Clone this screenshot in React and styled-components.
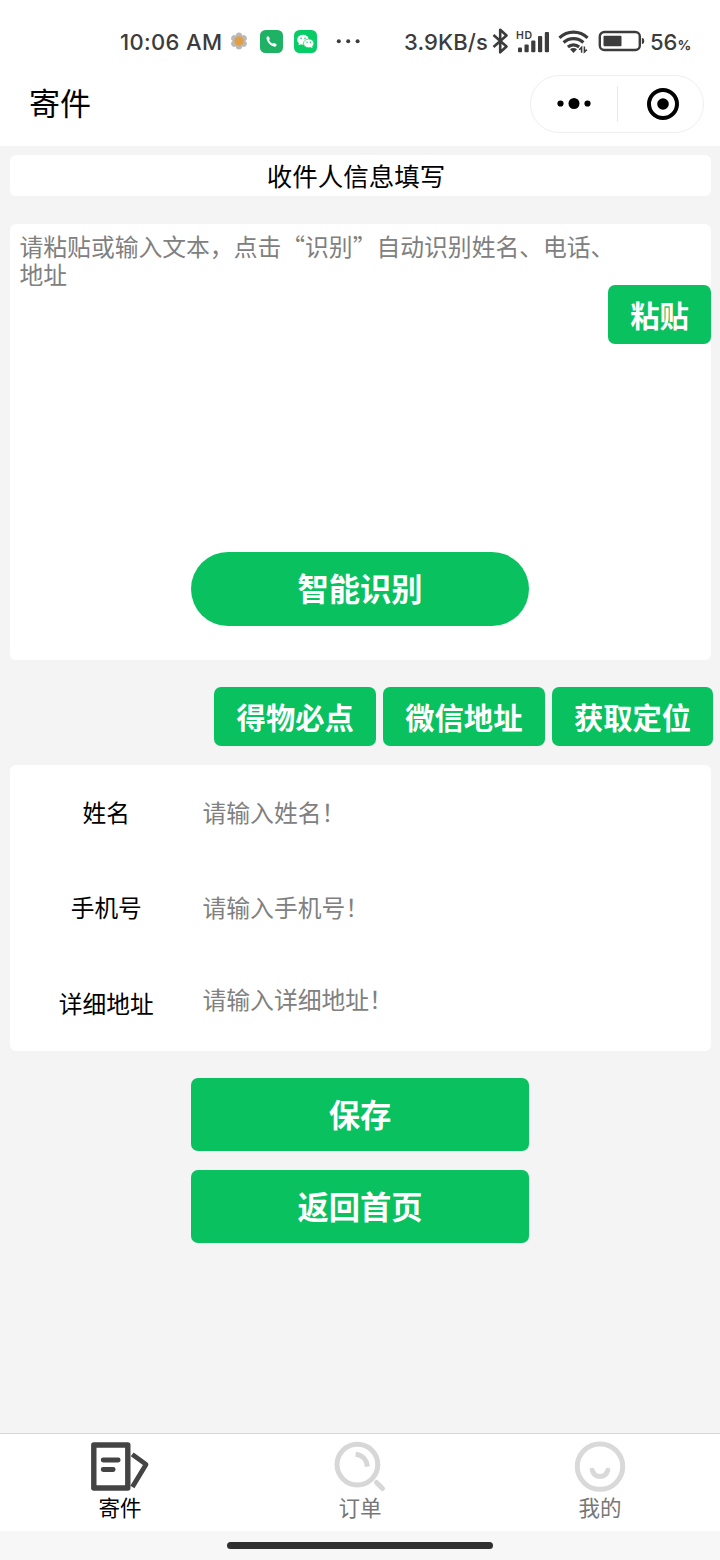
import React from "react";
import styled, { createGlobalStyle } from "styled-components";

const green = "#09c15f";
const ink = "#3c3c3c";

const GlobalStyle = createGlobalStyle`
    body {
        margin: 0;
        background: #f4f4f4;
        font-family: "Noto Sans CJK SC", sans-serif;
    }
    * {
        box-sizing: border-box;
    }
    button, input, textarea {
        font-family: inherit;
        border: 0;
        outline: 0;
        padding: 0;
    }
`;

const Page = styled.div`
    width: 720px;
    height: 1560px;
    display: flex;
    flex-direction: column;
    background: #f4f4f4;
    overflow: hidden;
`;

const StatusBar = styled.div`
    height: 74px;
    padding: 8px 30px 0 120px;
    display: flex;
    align-items: center;
    background: white;
    color: ${ink};
    font-family: Inter, sans-serif;
    svg {
        display: block;
        flex: none;
    }
`;

const StatusText = styled.span`
    font-size: 22px;
    font-weight: 500;
    height: 31px;
    line-height: 30px;
    padding-top: 1px;
    width: ${props => props.$width}px;
    letter-spacing: ${props => props.$spacing || 0}px;
    white-space: nowrap;
    flex: none;
    small {
        font-size: 13.5px;
        font-weight: 700;
        line-height: 1;
        letter-spacing: 0;
    }
`;

const Gap = styled.i`
    flex: none;
    width: ${props => props.$w}px;
`;

const NavBar = styled.div`
    height: 72px;
    padding: 0 16px 12px 29px;
    display: flex;
    align-items: center;
    justify-content: space-between;
    background: white;
`;

const NavTitle = styled.h1`
    margin: 0;
    padding-bottom: 4px;
    font-size: 31px;
    font-weight: 400;
    line-height: 44px;
    color: black;
`;

const Capsule = styled.div`
    width: 174px;
    height: 58px;
    border: 1px solid #efefef;
    border-radius: 29px;
    display: flex;
    align-items: center;
`;

const CapsuleHalf = styled.div`
    width: 86px;
    height: 36px;
    display: flex;
    align-items: center;
    justify-content: center;
    & + & {
        border-left: 1px solid #e9e9e9;
        padding-left: 4px;
    }
`;

const Content = styled.main`
    flex: 1;
    display: flex;
    flex-direction: column;
    padding: 9px 9px 0 10px;
`;

const Card = styled.section`
    flex: none;
    height: ${props => props.$height}px;
    background: white;
    border-radius: 6px;
`;

const TitleCard = styled(Card)`
    display: flex;
    justify-content: center;
    padding-right: 9px;
    font-size: 25.5px;
    line-height: 40px;
    color: black;
`;

const PasteCard = styled(Card)`
    margin-top: 27.5px;
    display: grid;
    grid-template-columns: 598px 103px;
    grid-template-rows: 328.5px 74px;
`;

/* a little wider than its column, so the first line can end above the paste button */
const PasteArea = styled.textarea`
    height: 300px;
    margin: 8.5px -9px 0 9.5px;
    width: 597px;
    resize: none;
    overflow: hidden;
    background: transparent;
    font-size: 23.8px;
    line-height: 28px;
    &::placeholder {
        color: #808080;
        opacity: 1;
    }
`;

const Button = styled.button`
    background: ${green};
    color: white;
    font-weight: 700;
    border-radius: 7px;
`;

const SmallButton = styled(Button)`
    width: ${props => props.$width || 161.7}px;
    height: 59px;
    padding-bottom: 1px;
    font-size: 29.3px;
    line-height: 58px;
    margin-top: ${props => props.$top || 0}px;
`;

const BigButton = styled(Button)`
    width: 338px;
    height: 73.5px;
    padding-bottom: 1px;
    font-size: 31.3px;
    line-height: 72px;
    border-radius: ${props => (props.$round ? 37 : 7)}px;
`;

const RecognizeRow = styled.div`
    grid-column: 1 / 3;
    display: flex;
    justify-content: center;
    align-items: flex-start;
    padding-right: 1px;
`;

const ActionRow = styled.div`
    display: flex;
    justify-content: flex-end;
    gap: 7px;
    margin: 27px -2.4px 19px 0;
`;

const FieldRow = styled.label`
    display: flex;
    align-items: center;
    height: 95.3px;
    padding-bottom: 1px;
    font-size: 23.7px;
`;

const FieldName = styled.span`
    width: 192.5px;
    text-align: center;
    color: black;
`;

const FieldInput = styled.input`
    flex: 1;
    height: 40px;
    font-size: 23.8px;
    margin-bottom: ${props => props.$lift || 1}px;
    background: transparent;
    &::placeholder {
        color: #808080;
        opacity: 1;
    }
`;

const SubmitColumn = styled.div`
    display: flex;
    flex-direction: column;
    align-items: center;
    gap: 18.5px;
    padding: 26.6px 1px 0 0;
`;

const TabBar = styled.nav`
    flex: none;
    height: 98px;
    display: grid;
    grid-template-columns: repeat(3, 1fr);
    border-top: 1px solid #d5d5d5;
    background: white;
`;

const Tab = styled.div`
    display: flex;
    flex-direction: column;
    align-items: center;
    padding-top: 4px;
    font-size: 21.5px;
    line-height: 30px;
    color: ${props => (props.$active ? "black" : "#777")};
    svg {
        display: block;
        margin-bottom: -2px;
    }
`;

const HomeArea = styled.div`
    flex: none;
    height: 29px;
    background: #f7f7f7;
    display: flex;
    align-items: center;
    justify-content: center;
`;

const HomeHandle = styled.div`
    width: 266px;
    height: 7px;
    border-radius: 4px;
    background: #303030;
`;

const FlowerIcon = () => (
    <svg width="20" height="20" viewBox="0 0 20 20">
        <g fill="#bcb8b5">
            {[0, 60, 120, 180, 240, 300].map(a => (
                <ellipse key={a} cx="10" cy="5" rx="3.2" ry="3.6" transform={`rotate(${a} 10 10)`} />
            ))}
        </g>
        <circle cx="10" cy="10" r="4.7" fill="#e0a04a" />
    </svg>
);

const PhoneIcon = () => (
    <svg width="23" height="23" viewBox="0 0 23 23">
        <rect width="23" height="23" rx="5.5" fill="#1fb264" />
        <path
            d="M6.6 7.1c.9-1.2 1.8-1.2 2.4-.2l.8 1.5c.3.7-.8 1.2-.6 1.8.5 1.5 1.8 2.8 3.3 3.4.7.2 1.1-.9 1.8-.6l1.8.9c.9.6.6 1.7-.5 2.5-2.7 1.6-9.9-4.4-9-9.3z"
            fill="white"
        />
    </svg>
);

const WechatIcon = () => (
    <svg width="23" height="23" viewBox="0 0 23 23">
        <rect width="23" height="23" rx="5.5" fill="#07cd66" />
        <path d="M4.5 15.2l.6-2.6 2.6 1.4z" fill="white" />
        <ellipse cx="9" cy="9.7" rx="5.8" ry="5" fill="white" />
        <ellipse cx="14.7" cy="13.4" rx="5.2" ry="4.4" fill="white" stroke="#07cd66" strokeWidth=".7" />
        <path d="M16 16.8l2.6 1.5-.6-2.4z" fill="white" />
        <g fill="#07cd66">
            <circle cx="7.1" cy="8.2" r=".8" />
            <circle cx="11" cy="8.2" r=".8" />
            <circle cx="13" cy="12.2" r=".7" />
            <circle cx="16.4" cy="12.2" r=".7" />
        </g>
    </svg>
);

const MoreDots = () => (
    <svg width="25" height="6" viewBox="0 0 25 6" fill={ink}>
        <circle cx="2.8" cy="3.3" r="2" />
        <circle cx="12.2" cy="3.3" r="2" />
        <circle cx="21.6" cy="3.3" r="2" />
    </svg>
);

const BluetoothIcon = () => (
    <svg width="17" height="26" viewBox="0 0 17 26">
        <path d="M1.5 7l13 11.5-6.3 5.8V1.8l6.3 5.7-13 11.5" fill="none" stroke={ink} strokeWidth="2.6" strokeLinejoin="round" />
    </svg>
);

const SignalIcon = () => (
    <svg width="34" height="24" viewBox="0 0 34 24" fill={ink}>
        <text x="0" y="9.8" fontFamily="Inter, sans-serif" fontSize="10.5" fontWeight="600" textLength="16">HD</text>
        <rect x="2" y="18.5" width="4" height="4.8" rx="1" />
        <rect x="8.5" y="15.5" width="4.2" height="7.8" rx="1" />
        <rect x="15.2" y="11.5" width="4.2" height="11.8" rx="1" />
        <rect x="22" y="7" width="4.2" height="16.3" rx="1" />
        <rect x="28.8" y="3" width="4.2" height="20.3" rx="1" />
    </svg>
);

const WifiIcon = () => (
    <svg width="31" height="25" viewBox="0 0 31 25">
        <g fill="none" stroke={ink} strokeWidth="3.1">
            <path d="M1.4 8.8c8-7.6 20.2-7.6 28.2 0" />
            <path d="M5.6 13.5c5.6-5.2 14.2-5.2 19.8 0" />
            <path d="M9.9 18c3.2-2.9 8-2.9 11.2 0" />
        </g>
        <path d="M12 20.2c2.1-1.6 4.9-1.6 7 0L15.5 24z" fill={ink} />
        <path d="M21.2 20.8l2.4-2.4v5.4M26.4 17.6V23l2.4-2.4" fill="none" stroke={ink} strokeWidth="1.5" />
    </svg>
);

const BatteryIcon = () => (
    <svg width="47" height="22" viewBox="0 0 47 22">
        <rect x="1.8" y="2" width="40" height="18" rx="4.5" fill="none" stroke={ink} strokeWidth="2.4" />
        <rect x="5.5" y="5.7" width="18" height="10.6" rx="1" fill={ink} />
        <path d="M43.9 8.1c1.7 0 2.3.9 2.3 2.9s-.6 2.9-2.3 2.9z" fill={ink} />
    </svg>
);

const MenuDots = () => (
    <svg width="36" height="14" viewBox="0 0 36 14">
        <circle cx="4.5" cy="6.5" r="3.1" />
        <circle cx="18" cy="6.5" r="5.5" />
        <circle cx="31.5" cy="6.5" r="3.1" />
    </svg>
);

const TargetIcon = () => (
    <svg width="34" height="34" viewBox="0 0 34 34">
        <circle cx="17" cy="17" r="14" fill="none" stroke="black" strokeWidth="4" />
        <circle cx="17" cy="17" r="5.8" />
    </svg>
);

const SendIcon = () => (
    <svg width="60" height="56" viewBox="0 0 60 56" fill="none" stroke="#444">
        <rect x="3.8" y="7" width="34" height="43" strokeWidth="5.4" strokeLinejoin="round" />
        <path d="M13.2 22h15M13.2 31.5h10" strokeWidth="4.8" strokeLinecap="round" />
        <path d="M42.2 16.4L56 26.4 42.4 49" strokeWidth="4.8" strokeLinejoin="round" />
    </svg>
);

const SearchIcon = () => (
    <svg width="60" height="56" viewBox="0 0 60 56" fill="none" stroke="#d7d7d7">
        <circle cx="27.4" cy="26.6" r="20.4" strokeWidth="5" />
        <path d="M25.6 16.2c6.6 .6 11 5.2 11.8 12.4" strokeWidth="5" />
        <path d="M46.5 44.5l6 6" strokeWidth="5" strokeLinecap="round" />
    </svg>
);

const SmileIcon = () => (
    <svg width="60" height="56" viewBox="0 0 60 56" fill="none" stroke="#d9d9d9">
        <circle cx="30" cy="28.6" r="22.7" strokeWidth="5" />
        <path d="M22.2 32.2c2.6 8.4 13 8.4 15.6 0" strokeWidth="5" strokeLinecap="round" />
    </svg>
);

const fields = [
    { name: "姓名", hint: "请输入姓名！" },
    { name: "手机号", hint: "请输入手机号！" },
    { name: "详细地址", hint: "请输入详细地址！", lift: 8 },
];

const tabs = [
    { name: "寄件", Icon: SendIcon, active: true },
    { name: "订单", Icon: SearchIcon },
    { name: "我的", Icon: SmileIcon },
];

function PhoneStatus() {
    return (
        <StatusBar>
            <StatusText $width={109} $spacing={0.35}>10:06 AM</StatusText>
            <FlowerIcon />
            <Gap $w={11} />
            <PhoneIcon />
            <Gap $w={11} />
            <WechatIcon />
            <Gap $w={19} />
            <MoreDots />
            <Gap $w={43} />
            <StatusText $width={88} $spacing={0.1}>3.9KB/s</StatusText>
            <BluetoothIcon />
            <Gap $w={7} />
            <SignalIcon />
            <Gap $w={8} />
            <WifiIcon />
            <Gap $w={9} />
            <BatteryIcon />
            <Gap $w={5} />
            <StatusText $width={40}>56<small>%</small></StatusText>
        </StatusBar>
    );
}

function App() {
    return (
        <Page lang="zh-CN">
            <GlobalStyle />
            <PhoneStatus />
            <NavBar>
                <NavTitle>寄件</NavTitle>
                <Capsule>
                    <CapsuleHalf><MenuDots /></CapsuleHalf>
                    <CapsuleHalf><TargetIcon /></CapsuleHalf>
                </Capsule>
            </NavBar>
            <Content>
                <TitleCard $height={41}>收件人信息填写</TitleCard>
                <PasteCard $height={436.5}>
                    <PasteArea placeholder="请粘贴或输入文本，点击“识别”自动识别姓名、电话、地址" />
                    <SmallButton $width={103} $top={61.7}>粘贴</SmallButton>
                    <RecognizeRow>
                        <BigButton $round>智能识别</BigButton>
                    </RecognizeRow>
                </PasteCard>
                <ActionRow>
                    <SmallButton>得物必点</SmallButton>
                    <SmallButton>微信地址</SmallButton>
                    <SmallButton>获取定位</SmallButton>
                </ActionRow>
                <Card $height={286}>
                    {fields.map(field => (
                        <FieldRow key={field.name}>
                            <FieldName>{field.name}</FieldName>
                            <FieldInput placeholder={field.hint} $lift={field.lift} />
                        </FieldRow>
                    ))}
                </Card>
                <SubmitColumn>
                    <BigButton>保存</BigButton>
                    <BigButton>返回首页</BigButton>
                </SubmitColumn>
            </Content>
            <TabBar>
                {tabs.map(({ name, Icon, active }) => (
                    <Tab key={name} $active={active}>
                        <Icon />
                        {name}
                    </Tab>
                ))}
            </TabBar>
            <HomeArea>
                <HomeHandle />
            </HomeArea>
        </Page>
    );
}

export default App;
